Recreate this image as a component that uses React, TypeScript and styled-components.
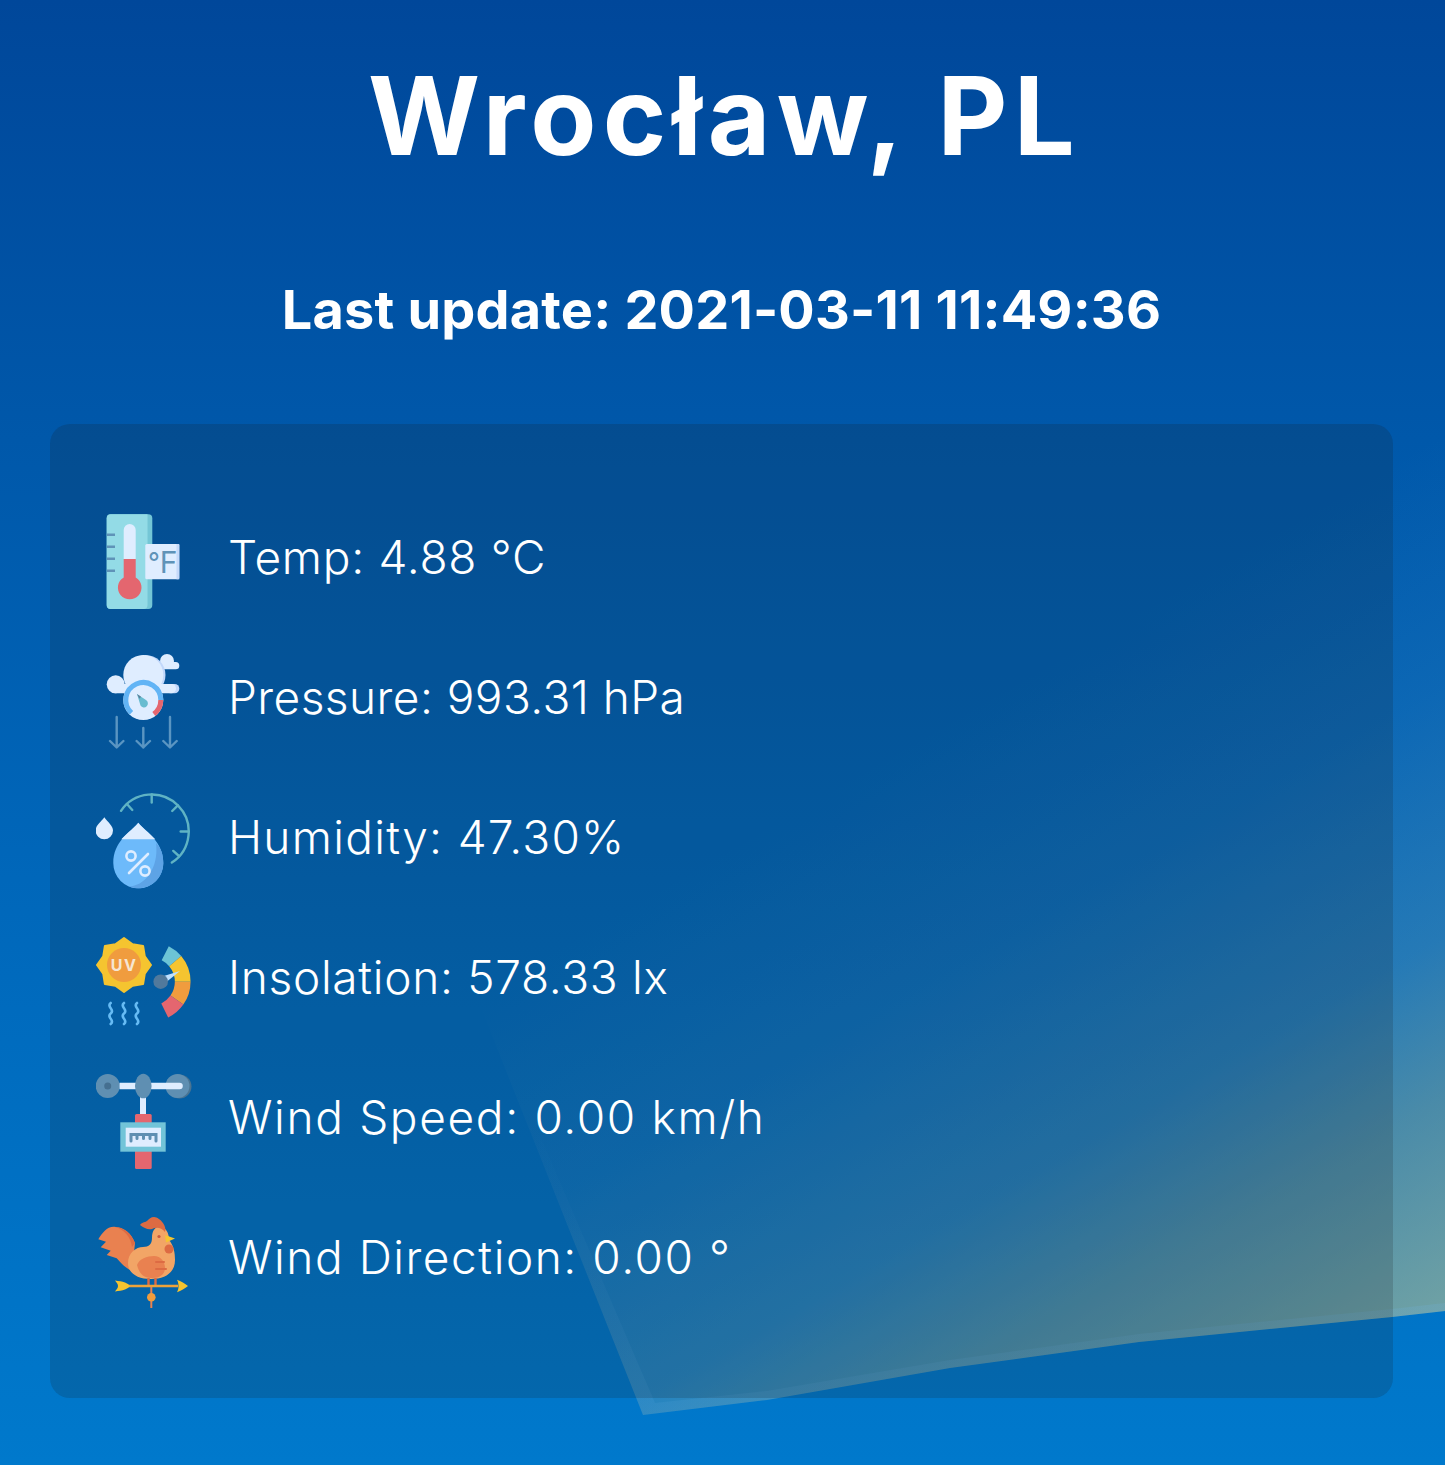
import * as React from 'react';
import styled, { createGlobalStyle } from 'styled-components';

const GlobalStyle = createGlobalStyle`
  html,
  body {
    margin: 0;
    padding: 0;
  }
  body {
    font-family: Inter, "Open Sans", "Liberation Sans", sans-serif;
    color: #fff;
  }
`;

const Page = styled.div`
  position: relative;
  min-height: 100vh;
  box-sizing: border-box;
  overflow: hidden;
  padding: 0 52px 67px 50px;
  background: linear-gradient(180deg, #00479a 0%, #0058aa 30%, #0067ba 60%, #0079cc 100%);

  /* light beam in the wallpaper */
  &::before {
    content: '';
    position: absolute;
    inset: 0;
    clip-path: polygon(430px 880px, 643px 1415px, 767px 1400px, 950px 1368px, 1139px 1342px, 1392px 1317px, 1445px 1311px, 1445px 400px, 1000px 400px);
    background: linear-gradient(150deg, rgba(120, 160, 190, 0) 55%, rgba(120, 160, 190, 0.1) 66%, rgba(170, 180, 160, 0.22) 77%, rgba(205, 190, 125, 0.36) 84%, rgba(220, 205, 130, 0.5) 93%);
  }

  /* brighter rim along the beam's edges */
  &::after {
    content: '';
    position: absolute;
    inset: 0;
    clip-path: polygon(430px 880px, 643px 1415px, 767px 1400px, 950px 1368px, 1139px 1342px, 1392px 1317px, 1445px 1311px, 1445px 1303px, 1392px 1309px, 1139px 1334px, 950px 1360px, 767px 1391px, 655px 1403px);
    background: linear-gradient(150deg, rgba(110, 180, 235, 0) 62%, rgba(110, 180, 235, 0.1) 76%, rgba(110, 180, 235, 0.2) 100%);
  }
`;

const Content = styled.div`
  position: relative;
  z-index: 1;
`;

const Title = styled.h1`
  margin: 0;
  padding-top: 51px;
  font-size: 108px;
  line-height: 130px;
  font-weight: 700;
  letter-spacing: 6.2px;
  text-indent: 6px;
  text-align: center;
`;

const Updated = styled.h2`
  margin: 97px 0 0;
  font-size: 54px;
  line-height: 64px;
  font-weight: 700;
  letter-spacing: 0.2px;
  text-align: center;
`;

const Panel = styled.section`
  display: flex;
  flex-direction: column;
  gap: 44px;
  margin-top: 82px;
  padding: 89px 46px;
  border-radius: 20px;
  background: rgba(25, 25, 25, 0.17);
`;

const Row = styled.div`
  display: flex;
  align-items: center;
  gap: 36px;
`;

const Icon = styled.svg`
  display: block;
  flex: none;
  width: 96px;
  height: 96px;
`;

const Label = styled.span<{ $tracking: number }>`
  padding-bottom: 8px;
  font-size: 46px;
  line-height: 56px;
  font-weight: 300;
  letter-spacing: ${(p) => p.$tracking}px;
`;

const arc = (cx: number, cy: number, r: number, fromDeg: number, toDeg: number) => {
  const pt = (deg: number) => {
    const a = (deg * Math.PI) / 180;
    return `${(cx + r * Math.sin(a)).toFixed(2)} ${(cy - r * Math.cos(a)).toFixed(2)}`;
  };
  const large = toDeg - fromDeg > 180 ? 1 : 0;
  return `M${pt(fromDeg)}A${r} ${r} 0 ${large} 1 ${pt(toDeg)}`;
};

const tick = (cx: number, cy: number, r1: number, r2: number, deg: number) => {
  const a = (deg * Math.PI) / 180;
  const x = (r: number) => (cx + r * Math.sin(a)).toFixed(2);
  const y = (r: number) => (cy - r * Math.cos(a)).toFixed(2);
  return `M${x(r1)} ${y(r1)}L${x(r2)} ${y(r2)}`;
};

const sunPoints = Array.from({ length: 16 }, (_, i) => {
  const a = (i * Math.PI) / 8;
  const r = i % 2 === 0 ? 27 : 22.5;
  return `${(28 + r * Math.sin(a)).toFixed(2)},${(32 - r * Math.cos(a)).toFixed(2)}`;
}).join(' ');

const ThermoIcon = () => (
  <Icon viewBox="0 0 96 96">
    <rect x="10.7" y="1.3" width="45.6" height="94.7" rx="4" fill="#74c6d6" />
    <path d="M14.7 1.3H51.5V92a4 4 0 0 1-4 4H14.7a4 4 0 0 1-4-4V5.3a4 4 0 0 1 4-4Z" fill="#93dbe6" />
    <path d="M11 21.7h8M11 33.7h8M11 45.7h8M11 57.7h8" stroke="#5f93b8" strokeWidth="2.4" />
    <path d="M27.7 46V17a6 6 0 0 1 12 0v29Z" fill="#dfedff" />
    <path d="M27.7 46h12v18.4a11.8 11.8 0 1 1-12 0Z" fill="#e4666f" />
    <rect x="49.3" y="31" width="34" height="35.3" rx="1.5" fill="#dfedff" />
    <rect x="80.5" y="31" width="2.8" height="35.3" fill="#c6dafa" />
    <text x="52" y="60.3" fontFamily="Inter, sans-serif" fontSize="30" fill="#5f93b8">
      <tspan fontSize="26" dy="-2">°</tspan>
      <tspan dy="2">F</tspan>
    </text>
  </Icon>
);

const PressureIcon = () => (
  <Icon viewBox="0 0 96 96">
    <circle cx="71" cy="8" r="7" fill="#dfedff" />
    <rect x="60" y="9" width="23.3" height="7.3" rx="3.6" fill="#dfedff" />
    <circle cx="49.5" cy="22" r="20" fill="#c2d8fb" />
    <circle cx="47.3" cy="22" r="20" fill="#dfedff" />
    <circle cx="19.7" cy="31.3" r="9" fill="#dfedff" />
    <rect x="70" y="31" width="13.3" height="9.3" rx="4.6" fill="#c2d8fb" />
    <rect x="14" y="31" width="66" height="9.3" rx="4.6" fill="#dfedff" />
    <circle cx="47.3" cy="47" r="20" fill="#dfedff" />
    <path d={arc(47.3, 47, 17.5, -137, 90)} fill="none" stroke="#62b4f5" strokeWidth="5" />
    <path d={arc(47.3, 47, 17.5, 90, 143)} fill="none" stroke="#e4666f" strokeWidth="5" />
    <path d="M41 41l9 6a4 4 0 1 1-5.5 5.5Z" fill="#68bcd0" />
    <path d="M41 41l4 2.7-1.5 2Z" fill="#5f7f9a" />
    <g fill="none" stroke="#5a95c2" strokeWidth="2.4" strokeLinecap="round" strokeLinejoin="round">
      <path d="M20.7 64v30M14 88l6.7 6.5 6.7-6.5" />
      <path d="M47.3 75v19.500M40.6 88l6.700 6.500 6.700-6.500" />
      <path d="M74 64v30M67.3 88l6.700 6.500 6.700-6.500" />
    </g>
  </Icon>
);

const HumidityIcon = () => (
  <Icon viewBox="0 0 96 96">
    <g fill="none" stroke="#5fb3c4" strokeWidth="2.4" strokeLinecap="round">
      <path d={arc(55.7, 38.5, 37, -56, 147)} />
      {[-42, 0, 45, 90, 132].map((deg) => (
        <path key={deg} d={tick(55.7, 38.5, 37, 29, deg)} />
      ))}
    </g>
    <path d="M8.300 24.300c4 5.500 8.700 8.500 8.700 13.200a8.700 8.700 0 0 1-17.400 0c0-4.700 4.700-7.700 8.700-13.200Z" fill="#dfedff" />
    <path d="M42.300 29.700c8 10 25 18 25 40.600a25 25 0 0 1-50 0c0-22.600 17-30.600 25-40.600Z" fill="#6dbafa" />
    <path d="M60 50c5 5 7.300 11 7.300 20.300a25 25 0 0 1-34.300 23.200C50 93 63 74 60 50Z" fill="#5da3e6" />
    <path d="M42.300 29.700c4 5 11 10 17 16.600H25.300c6-6.600 13-11.600 17-16.600Z" fill="#dfedff" />
    <g fill="none" stroke="#dfedff" strokeWidth="2.6" strokeLinecap="round">
      <circle cx="35" cy="63" r="4.600" />
      <circle cx="49" cy="78" r="4.600" />
      <path d="M52 61 33 80" />
    </g>
  </Icon>
);

const InsolationIcon = () => (
  <Icon viewBox="0 0 96 96">
    <polygon points={sunPoints} fill="#f5c430" strokeLinejoin="round" stroke="#f5c430" strokeWidth="2" />
    <circle cx="28" cy="32" r="17" fill="#f09c3e" />
    <text x="28" y="38" textAnchor="middle" fontFamily="Inter, sans-serif" fontWeight="700" fontSize="16" letterSpacing="1.5" fill="#f6e6d2">UV</text>
    <g fill="none" stroke="#66bbf4" strokeWidth="2.6" strokeLinecap="round">
      <path d="M14.700 70c-5 4 5 6.500 0 10.500s5 6.500 0 10.500" />
      <path d="M28 70c-5 4 5 6.500 0 10.500s5 6.500 0 10.500" />
      <path d="M41 70c-5 4 5 6.500 0 10.500s5 6.500 0 10.500" />
    </g>
    <g fill="none" strokeWidth="15.7">
      <path d={arc(54.7, 48.7, 32, 27, 50)} stroke="#6cc4d6" />
      <path d={arc(54.7, 48.7, 32, 50, 90)} stroke="#f5c430" />
      <path d={arc(54.7, 48.7, 32, 90, 125)} stroke="#f09c3e" />
      <path d={arc(54.7, 48.7, 32, 125, 154)} stroke="#e4666f" />
    </g>
    <path d="M84 38 63 44.500l3 8Z" fill="#bfe0ff" />
    <circle cx="64.700" cy="48.700" r="7.300" fill="#51799c" />
  </Icon>
);

const WindSpeedIcon = () => (
  <Icon viewBox="0 0 96 96">
    <circle cx="11.700" cy="13" r="12" fill="#5f8fb2" />
    <circle cx="11.700" cy="13" r="3.500" fill="#456f90" />
    <circle cx="83.500" cy="13.500" r="12" fill="#4a7492" />
    <circle cx="81.500" cy="13" r="12" fill="#5f8fb2" />
    <path d="M23.500 9.700h60a3.300 3.300 0 0 1 0 6.600h-60Z" fill="#dfedff" />
    <rect x="44" y="20" width="6" height="22" fill="#dfedff" />
    <ellipse cx="47.300" cy="13" rx="8.300" ry="12.300" fill="#5f8fb2" />
    <rect x="39" y="41" width="16.700" height="55" rx="1.500" fill="#e4666f" />
    <rect x="24.300" y="49.300" width="45.400" height="29.400" fill="#72c4d8" />
    <rect x="29.700" y="54.700" width="35.300" height="19" fill="#dfedff" />
    <path d="M35 68v-6.500h25V68M41 61.500v4M47.500 61.500v4M54 61.500v4" fill="none" stroke="#5f8fb2" strokeWidth="3" strokeLinecap="round" />
  </Icon>
);

const RoosterIcon = () => (
  <Icon viewBox="0 0 96 96">
    <path d="M39 30C35 20 28 14 18 13.700 11 13.500 6 20 2.300 26.300L10 28.700 4.700 34.300l10 3.400-4 4.300 10 3.300C25 50 29 55 36 58Z" fill="#e98150" />
    <path d="M18 13.700C28 14 35 20 39 30l-3 4C35 24 28 16 18 13.700Z" fill="#dd6b43" />
    <path d="M56 25c0-9 5-13 10-11 5 2 7 7 7 13 5 6 6 13 6 20 0 12-9 19-24 19-14 0-23-6-23-16 0-10 8-16 15-16 6 0 9-3 9-9Z" fill="#f2a566" />
    <path d="M41 52c2-6 10-9 17-9 7 0 11 6 11 12s-5 10-12 10c-8 0-13-2-16-13Z" fill="#e98150" />
    <path d="M60 49h8M60 56h10" stroke="#dd6b43" strokeWidth="2" strokeLinecap="round" />
    <path d="M44 12c2-3 6-3 7-4 2-2 4-4 7-4 3 0 7 3 9 6 2 3 3 6 2 9-4-5-9-5-13-3-4 1-8-1-12-4Z" fill="#dd6b43" />
    <circle cx="63" cy="23.500" r="1.600" fill="#c95a3c" />
    <path d="M69 22l10 3.500-9 4Z" fill="#f5c430" />
    <circle cx="73" cy="36" r="4.500" fill="#dd6b43" />
    <path d="M52.500 65v9M59.500 65v9" stroke="#dd6b43" strokeWidth="2.4" />
    <path d="M30 73h52" stroke="#eda23a" strokeWidth="2.6" />
    <path d="M19 67.500c4 .5 7 1 10 2 2 .7 4 2 5 3.500-1 1.500-3 2.800-5 3.500-3 1-6 1.500-10 2 1.500-2 3-3.500 3-5.500s-1.500-3.500-3-5.500Z" fill="#f5c430" />
    <path d="M81 66.700c4 1.300 8 3.800 11 6.300-3 2.500-7 5-11 6.300 1-2 1.500-4 1.500-6.300S82 68.700 81 66.700Z" fill="#f5c430" />
    <path d="M55.300 74v21" stroke="#e98150" strokeWidth="2" />
    <circle cx="55.300" cy="84.300" r="4.300" fill="#f09c3e" />
  </Icon>
);

const readings = [
  { icon: <ThermoIcon />, text: 'Temp: 4.88 °C', tracking: 0.75 },
  { icon: <PressureIcon />, text: 'Pressure: 993.31 hPa', tracking: 0.45 },
  { icon: <HumidityIcon />, text: 'Humidity: 47.30%', tracking: 1.3 },
  { icon: <InsolationIcon />, text: 'Insolation: 578.33 lx', tracking: 0.7 },
  { icon: <WindSpeedIcon />, text: 'Wind Speed: 0.00 km/h', tracking: 1.65 },
  { icon: <RoosterIcon />, text: 'Wind Direction: 0.00 °', tracking: 1.55 },
];

const App: React.FC = () => (
  <>
    <GlobalStyle />
    <Page>
      <Content>
        <Title>Wrocław, PL</Title>
        <Updated>Last update: 2021-03-11 11:49:36</Updated>
        <Panel>
          {readings.map((item) => (
            <Row key={item.text}>
              {item.icon}
              <Label $tracking={item.tracking}>{item.text}</Label>
            </Row>
          ))}
        </Panel>
      </Content>
    </Page>
  </>
);

export default App;
